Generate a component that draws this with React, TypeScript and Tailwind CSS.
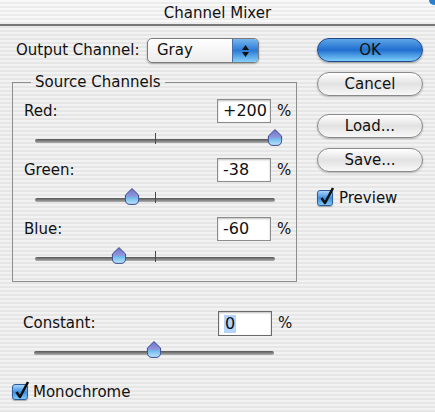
import React from 'react';

type Channel = { name: string; value: string; amount: number };

const channels: Channel[] = [
  { name: 'Red:', value: '+200', amount: 200 },
  { name: 'Green:', value: '-38', amount: -38 },
  { name: 'Blue:', value: '-60', amount: -60 },
];

const Thumb: React.FC<{ amount: number }> = ({ amount }) => {
  const left = ((amount + 200) / 400) * 240 - 8;
  return (
    <svg
      className="absolute top-[-10px]"
      style={{ left }}
      width="16"
      height="17"
      viewBox="0 0 16 17"
    >
      <defs>
        <linearGradient id="thumbFill" x1="0" y1="0" x2="0" y2="1">
          <stop offset="0" stopColor="#6d73c9" />
          <stop offset="0.5" stopColor="#8f97dd" />
          <stop offset="0.56" stopColor="#6db6ea" />
          <stop offset="1" stopColor="#bde6fb" />
        </linearGradient>
      </defs>
      <path
        d="M8 0.6 L14.6 7 L14.6 11.5 Q14.6 16.4 10 16.4 L6 16.4 Q1.4 16.4 1.4 11.5 L1.4 7 Z"
        fill="url(#thumbFill)"
        stroke="#3e4a8e"
        strokeWidth="1"
      />
    </svg>
  );
};

const Slider: React.FC<{ amount: number; tick?: boolean; height: string }> = ({ amount, tick = true, height }) => (
  <div className={`flex items-center ${height}`}>
    <div className="relative ml-[22px] h-[4px] w-[240px] rounded-full bg-gradient-to-b from-[#555] to-[#b0b0b0]">
      {tick && <span className="absolute left-[120px] top-[-6px] h-[11px] w-[1px] bg-[#4a4a4a]" />}
      <Thumb amount={amount} />
    </div>
  </div>
);

const ValueRow: React.FC<{ label: string; value: string; height: string; selected?: boolean }> = ({ label, value, height, selected }) => (
  <div className={`flex items-center ${height}`}>
    <span className="flex-1 pl-[11px]">{label}</span>
    <div className={`flex h-full w-[54px] items-center border bg-white pl-[5px] text-[16px] shadow-[inset_0_1px_2px_rgba(0,0,0,0.25)] ${selected ? 'border-[#6a6a6a]' : 'border-[#8c8c8c]'}`}>
      {selected ? <span className="bg-[#b4d4fb] px-[1px] leading-[18px]">{value}</span> : value}
    </div>
    <span className="w-[25px] pl-[6px]">%</span>
  </div>
);

const Check: React.FC = () => (
  <div className="relative h-[16px] w-[16px] rounded-[3px] border border-[#2f5b9a] bg-gradient-to-b from-[#a8d6fa] via-[#3d8fe0] to-[#7cc8f7] shadow-[0_1px_1px_rgba(0,0,0,0.3)]">
    <svg className="absolute left-[1px] top-[-5px]" width="16" height="20" viewBox="0 0 16 20">
      <path d="M2.5 12 L6 17 L14 2" fill="none" stroke="#111" strokeWidth="2.6" strokeLinejoin="round" />
    </svg>
  </div>
);

const AquaButton: React.FC<{ label: string; primary?: boolean; className?: string }> = ({ label, primary, className = '' }) => (
  <div
    className={`flex h-[24px] w-[106px] items-center justify-center rounded-full border text-[15px] ${
      primary
        ? 'border-[#23488a] bg-gradient-to-b from-[#5ea6e6] via-[#1f6ed0] to-[#7ccdf8] shadow-[0_1px_2px_rgba(0,0,0,0.35)]'
        : 'border-[#8a8a8a] bg-gradient-to-b from-[#ffffff] via-[#e2e2e2] to-[#f8f8f8] shadow-[0_1px_2px_rgba(0,0,0,0.25)]'
    } ${className}`}
  >
    {label}
  </div>
);

const App: React.FC = () => {
  return (
    <div className="relative h-[412px] w-[435px] overflow-hidden bg-[repeating-linear-gradient(180deg,#f2f2f2_0px,#f2f2f2_2px,#e6e6e6_2px,#e6e6e6_4px)] font-['DejaVu_Sans',sans-serif] text-[15px] text-[#111]">
      <div className="flex h-[26px] items-center justify-center border-b-2 border-[#777] bg-[repeating-linear-gradient(180deg,#f8f8f8_0px,#f8f8f8_2px,#ececec_2px,#ececec_4px)] pt-[3px]">
        Channel Mixer
      </div>
      <span className="absolute right-0 top-0 h-[5px] w-[6px] rounded-bl-full bg-[#2a7fd0]" />

      <div className="flex">
        <div className="w-[317px] pl-[12px]">
          <div className="mt-[12px] flex h-[25px] items-center">
            <span className="w-[135px] pl-[4px]">Output Channel:</span>
            <div className="flex h-[25px] w-[112px] overflow-hidden rounded-[5px] border border-[#7a7a7a] bg-gradient-to-b from-[#ffffff] to-[#ececec] shadow-[0_1px_2px_rgba(0,0,0,0.3)]">
              <span className="flex flex-1 items-center pl-[9px]">Gray</span>
              <div className="flex w-[26px] flex-col items-center justify-center gap-[2px] border-l border-[#4a6fa8] bg-gradient-to-b from-[#74b6ef] via-[#2a7ad6] to-[#86d0f8]">
                <svg width="7" height="5" viewBox="0 0 7 5"><path d="M3.5 0 L7 5 L0 5 Z" fill="#111" /></svg>
                <svg width="7" height="5" viewBox="0 0 7 5"><path d="M0 0 L7 0 L3.5 5 Z" fill="#111" /></svg>
              </div>
            </div>
          </div>

          <fieldset className="mt-[10px] w-[285px] border border-[#8e8e8e] pb-[5px]">
            <legend className="ml-[18px] px-[4px] leading-[18px]">Source Channels</legend>
            <div className="pt-[8px]">
              {channels.map((c) => (
                <div key={c.name}>
                  <ValueRow label={c.name} value={c.value} height="h-[24px]" />
                  <Slider amount={c.amount} height="h-[35px]" />
                </div>
              ))}
            </div>
          </fieldset>

          <div className="mt-[29px] w-[285px]">
            <ValueRow label="Constant:" value="0" height="h-[25px]" selected />
            <Slider amount={0} tick={false} height="h-[33px]" />
          </div>

          <div className="mt-[12px] flex items-center gap-[5px]">
            <Check />
            <span>Monochrome</span>
          </div>
        </div>

        <div className="mt-[12px] flex flex-col">
          <AquaButton label="OK" primary />
          <AquaButton label="Cancel" className="mt-[10px]" />
          <AquaButton label="Load..." className="mt-[18px]" />
          <AquaButton label="Save..." className="mt-[10px]" />
          <div className="mt-[15px] flex items-center gap-[6px]">
            <Check />
            <span>Preview</span>
          </div>
        </div>
      </div>
    </div>
  );
};

export default App;
